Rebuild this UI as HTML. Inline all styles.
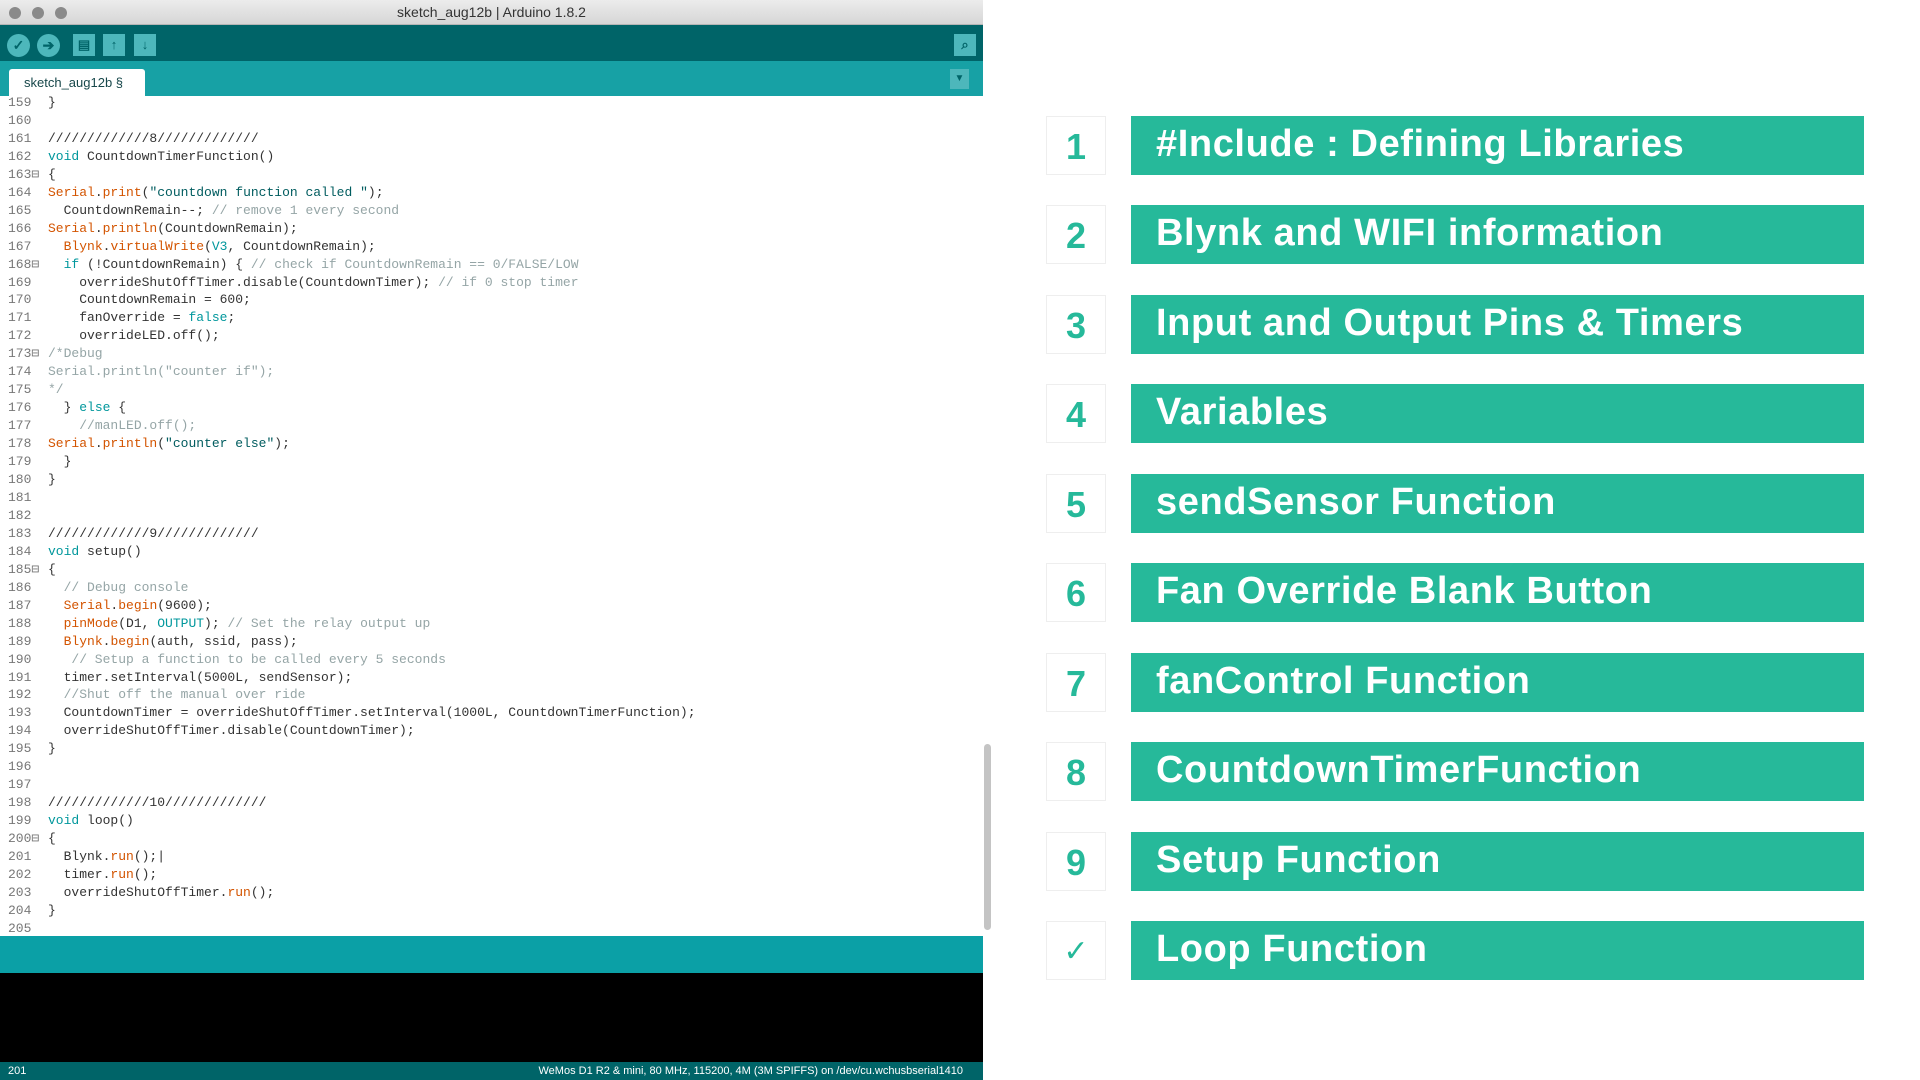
<!DOCTYPE html>
<html><head><meta charset="utf-8"><style>
*{margin:0;padding:0;box-sizing:border-box}
body{width:1920px;height:1080px;background:#fff;position:relative;overflow:hidden;font-family:"Liberation Sans",sans-serif}
.abs{position:absolute}
#title{left:0;top:0;width:983px;height:25px;background:linear-gradient(#ececec,#d6d6d6);border-bottom:1px solid #b5b5b5;text-align:center;font-size:14px;line-height:25px;color:#333}
.dot{top:7px;width:12px;height:12px;border-radius:50%;background:#8a8a8a}
#tool{left:0;top:25px;width:983px;height:36px;background:#006468}
.cb{top:9px;width:23px;height:23px;border-radius:50%;background:#4db7bb;color:#006468;font-size:14px;font-weight:bold;text-align:center;line-height:23px}
.sb{top:9px;width:22px;height:22px;background:#4db7bb;color:#006468;font-size:13px;font-weight:bold;text-align:center;line-height:22px}
#tabs{left:0;top:61px;width:983px;height:35px;background:#17a1a5}
#tab{left:9px;top:8px;width:136px;height:27px;background:#fff;border-radius:3px 3px 0 0;font-size:13px;line-height:27px;color:#17474a;padding-left:15px}
pre{font-family:"Liberation Mono",monospace;font-size:13px;line-height:17.96px;position:absolute;top:94px}
#gut{left:8px;color:#777}
#code{left:48px;color:#333}
.k{color:#00979c}.o{color:#d35400}.s{color:#005c5f}.c{color:#95a5a6}
#band{left:0;top:936px;width:983px;height:37px;background:#0ba0a6}
#black{left:0;top:973px;width:983px;height:89px;background:#000}
#status{left:0;top:1062px;width:983px;height:18px;background:#006468;color:#fff;font-size:11px;line-height:18px}
.num{left:1046px;width:60px;height:59px;border:1px solid #eee;background:#fff;color:#26b99a;font-weight:bold;font-size:36px;text-align:center;line-height:59px}
.bar{left:1131px;width:733px;height:59px;background:#26b99a;color:#fff;font-weight:bold;font-size:38px;letter-spacing:0.6px;line-height:57px;padding-left:25px;white-space:nowrap}
</style></head><body>
<div id="title" class="abs">sketch_aug12b | Arduino 1.8.2</div>
<div class="abs dot" style="left:9px"></div><div class="abs dot" style="left:32px"></div><div class="abs dot" style="left:55px"></div>
<div id="tool" class="abs">
<div class="abs cb" style="left:7px">✓</div>
<div class="abs cb" style="left:37px">➔</div>
<div class="abs sb" style="left:73px">▤</div>
<div class="abs sb" style="left:103px">↑</div>
<div class="abs sb" style="left:134px">↓</div>
<div class="abs sb" style="left:954px">⌕</div>
</div>
<div id="tabs" class="abs"><div id="tab" class="abs">sketch_aug12b §</div>
<div class="abs" style="left:950px;top:8px;width:19px;height:20px;background:#4db7bb;color:#006468;font-size:10px;text-align:center;line-height:20px">▼</div></div>
<div class="abs" style="left:984px;top:744px;width:7px;height:186px;border-radius:4px;background:#c4c4c4"></div>
<pre id="gut">159
160
161
162
163⊟
164
165
166
167
168⊟
169
170
171
172
173⊟
174
175
176
177
178
179
180
181
182
183
184
185⊟
186
187
188
189
190
191
192
193
194
195
196
197
198
199
200⊟
201
202
203
204
205</pre>
<pre id="code">}

/////////////8/////////////
<span class="k">void</span> CountdownTimerFunction()
{
<span class="o">Serial</span>.<span class="o">print</span>(<span class="s">"countdown function called "</span>);
  CountdownRemain--; <span class="c">// remove 1 every second</span>
<span class="o">Serial</span>.<span class="o">println</span>(CountdownRemain);
  <span class="o">Blynk</span>.<span class="o">virtualWrite</span>(<span class="k">V3</span>, CountdownRemain);
  <span class="k">if</span> (!CountdownRemain) { <span class="c">// check if CountdownRemain == 0/FALSE/LOW</span>
    overrideShutOffTimer.disable(CountdownTimer); <span class="c">// if 0 stop timer</span>
    CountdownRemain = 600;
    fanOverride = <span class="k">false</span>;
    overrideLED.off();
<span class="c">/*Debug
Serial.println("counter if");
*/</span>
  } <span class="k">else</span> {
    <span class="c">//manLED.off();</span>
<span class="o">Serial</span>.<span class="o">println</span>(<span class="s">"counter else"</span>);
  }
}


/////////////9/////////////
<span class="k">void</span> setup()
{
  <span class="c">// Debug console</span>
  <span class="o">Serial</span>.<span class="o">begin</span>(9600);
  <span class="o">pinMode</span>(D1, <span class="k">OUTPUT</span>); <span class="c">// Set the relay output up</span>
  <span class="o">Blynk</span>.<span class="o">begin</span>(auth, ssid, pass);
   <span class="c">// Setup a function to be called every 5 seconds</span>
  timer.setInterval(5000L, sendSensor);
  <span class="c">//Shut off the manual over ride</span>
  CountdownTimer = overrideShutOffTimer.setInterval(1000L, CountdownTimerFunction);
  overrideShutOffTimer.disable(CountdownTimer);
}


/////////////10/////////////
<span class="k">void</span> loop()
{
  Blynk.<span class="o">run</span>();|
  timer.<span class="o">run</span>();
  overrideShutOffTimer.<span class="o">run</span>();
}
</pre>
<div id="band" class="abs"></div>
<div id="black" class="abs"></div>
<div id="status" class="abs"><span style="position:absolute;left:8px">201</span><span style="position:absolute;right:20px">WeMos D1 R2 &amp; mini, 80 MHz, 115200, 4M (3M SPIFFS) on /dev/cu.wchusbserial1410</span></div>

<div class="abs num" style="top:116px">1</div><div class="abs bar" style="top:116px">#Include : Defining Libraries</div>
<div class="abs num" style="top:205px">2</div><div class="abs bar" style="top:205px">Blynk and WIFI information</div>
<div class="abs num" style="top:295px">3</div><div class="abs bar" style="top:295px">Input and Output Pins &amp; Timers</div>
<div class="abs num" style="top:384px">4</div><div class="abs bar" style="top:384px">Variables</div>
<div class="abs num" style="top:474px">5</div><div class="abs bar" style="top:474px">sendSensor Function</div>
<div class="abs num" style="top:563px">6</div><div class="abs bar" style="top:563px">Fan Override Blank Button</div>
<div class="abs num" style="top:653px">7</div><div class="abs bar" style="top:653px">fanControl Function</div>
<div class="abs num" style="top:742px">8</div><div class="abs bar" style="top:742px">CountdownTimerFunction</div>
<div class="abs num" style="top:832px">9</div><div class="abs bar" style="top:832px">Setup Function</div>
<div class="abs num" style="top:921px;font-family:'DejaVu Sans',sans-serif;font-weight:normal;font-size:30px">✓</div><div class="abs bar" style="top:921px">Loop Function</div>
</body></html>
